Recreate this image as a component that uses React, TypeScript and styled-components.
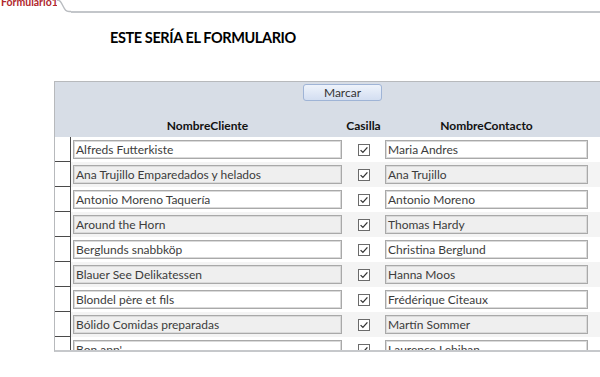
import React from 'react';
import styled, { createGlobalStyle } from 'styled-components';

const rows: [string, string][] = [
  ['Alfreds Futterkiste', 'Maria Andres'],
  ['Ana Trujillo Emparedados y helados', 'Ana Trujillo'],
  ['Antonio Moreno Taquería', 'Antonio Moreno'],
  ['Around the Horn', 'Thomas Hardy'],
  ['Berglunds snabbköp', 'Christina Berglund'],
  ['Blauer See Delikatessen', 'Hanna Moos'],
  ['Blondel père et fils', 'Frédérique Citeaux'],
  ['Bólido Comidas preparadas', 'Martín Sommer'],
  ["Bon app'", 'Laurence Lebihan'],
];

const CheckMark: React.FC = () => (
  <svg width="12" height="12" viewBox="0 0 12 12">
    <rect x="0.5" y="0.5" width="11" height="11" fill="#fff" stroke="#6b6b6b" />
    <path d="M2.6 6.1 L4.9 8.4 L9.4 3.4" fill="none" stroke="#333" strokeWidth="1.3" />
  </svg>
);

const App: React.FC = () => {
  return (
    <>
      <GlobalStyle />
      <TabBar>
        <Tab>
          <TabLabel>Formulario1</TabLabel>
        </Tab>
        <TabCurve width="14" height="13" viewBox="0 0 14 13">
          <path d="M0 0 C3 0 4 2 6 6 C8 10 9 11.5 12 11.5 L14 11.5" fill="none" stroke="#b9bcc0" strokeWidth="1.4" />
        </TabCurve>
        <TabLine />
      </TabBar>

      <Title>ESTE SERÍA EL FORMULARIO</Title>

      <Form>
        <Header>
          <ButtonRow>
            <MarkButton>Marcar</MarkButton>
          </ButtonRow>
          <Grid>
            <span />
            <Label>NombreCliente</Label>
            <Label>Casilla</Label>
            <Label>NombreContacto</Label>
          </Grid>
        </Header>

        {rows.map(([client, contact], i) => (
          <Row key={client} alt={i % 2 === 1}>
            <Selector />
            <Field alt={i % 2 === 1}>{client}</Field>
            <CheckCell>
              <CheckMark />
            </CheckCell>
            <Field alt={i % 2 === 1}>{contact}</Field>
          </Row>
        ))}
      </Form>
    </>
  );
};

export default App;

const GlobalStyle = createGlobalStyle`
  html, body {
    margin: 0;
    padding: 0;
    background: #fff;
    overflow: hidden;
    font-family: Lato, "Open Sans", sans-serif;
  }
`;

const TabBar = styled.div`
  display: flex;
  align-items: flex-start;
  height: 13px;
  width: 600px;
`;

const Tab = styled.div`
  width: 57px;
  height: 13px;
  overflow: hidden;
`;

const TabLabel = styled.div`
  margin-top: -4px;
  padding-left: 1px;
  color: #b0262c;
  font-size: 10.5px;
  font-weight: 700;
  line-height: 13px;
  white-space: nowrap;
`;

const TabCurve = styled.svg`
  display: block;
  flex: none;
`;

const TabLine = styled.div`
  flex: 1;
  height: 11px;
  border-bottom: 2px solid #c3c6ca;
`;

const Title = styled.h1`
  margin: 14px 0 0 110px;
  height: 54px;
  color: #000;
  font-size: 14.5px;
  font-weight: 700;
  line-height: 22px;
  letter-spacing: -0.4px;
`;

const Form = styled.div`
  margin-left: 54px;
  width: 560px;
  height: 268px;
  overflow: hidden;
  border-top: 1px solid #b7b9bc;
  border-left: 1px solid #b7b9bc;
  border-bottom: 2px solid #c6c8cb;
`;

const Header = styled.div`
  height: 55px;
  background: #d7dde6;
`;

const ButtonRow = styled.div`
  display: flex;
  padding: 2px 0 0 248px;
  height: 31px;
  box-sizing: border-box;
`;

const MarkButton = styled.button`
  width: 79px;
  height: 17px;
  padding: 0;
  border: 1px solid #9fb4d6;
  border-radius: 3px;
  background: linear-gradient(#eef3fb, #d3def1);
  color: #333;
  font-family: Lato, "Open Sans", sans-serif;
  font-size: 12px;
  line-height: 15px;
`;

const columns = '16px 271px 43px 203px';

const Grid = styled.div`
  display: grid;
  grid-template-columns: ${columns};
  height: 24px;
  align-items: center;
  & > :nth-child(2) {
    margin-left: 2px;
  }
`;

const Label = styled.div`
  text-align: center;
  color: #111;
  font-size: 12px;
  font-weight: 700;
`;

const Row = styled.div<{ alt: boolean }>`
  display: grid;
  grid-template-columns: ${columns};
  align-items: center;
  height: 25px;
  background: ${({ alt }) => (alt ? '#f4f4f4' : '#fff')};
  & > :nth-child(2) {
    margin-left: 2px;
  }
`;

const Selector = styled.div`
  height: 25px;
  box-sizing: border-box;
  border-right: 1px solid #4a4a4a;
  border-bottom: 1px solid #4a4a4a;
  background: #fff;
`;

const Field = styled.div<{ alt: boolean }>`
  height: 19px;
  box-sizing: border-box;
  padding: 0 2px;
  border: 1px solid #a9a9a9;
  box-shadow: inset 0 0 0 1px #dadada;
  background: ${({ alt }) => (alt ? '#efefef' : '#fff')};
  color: #3c3c3c;
  font-size: 12px;
  line-height: 17px;
  white-space: nowrap;
  overflow: hidden;
`;

const CheckCell = styled.div`
  display: flex;
  justify-content: center;
  align-items: center;
`;
